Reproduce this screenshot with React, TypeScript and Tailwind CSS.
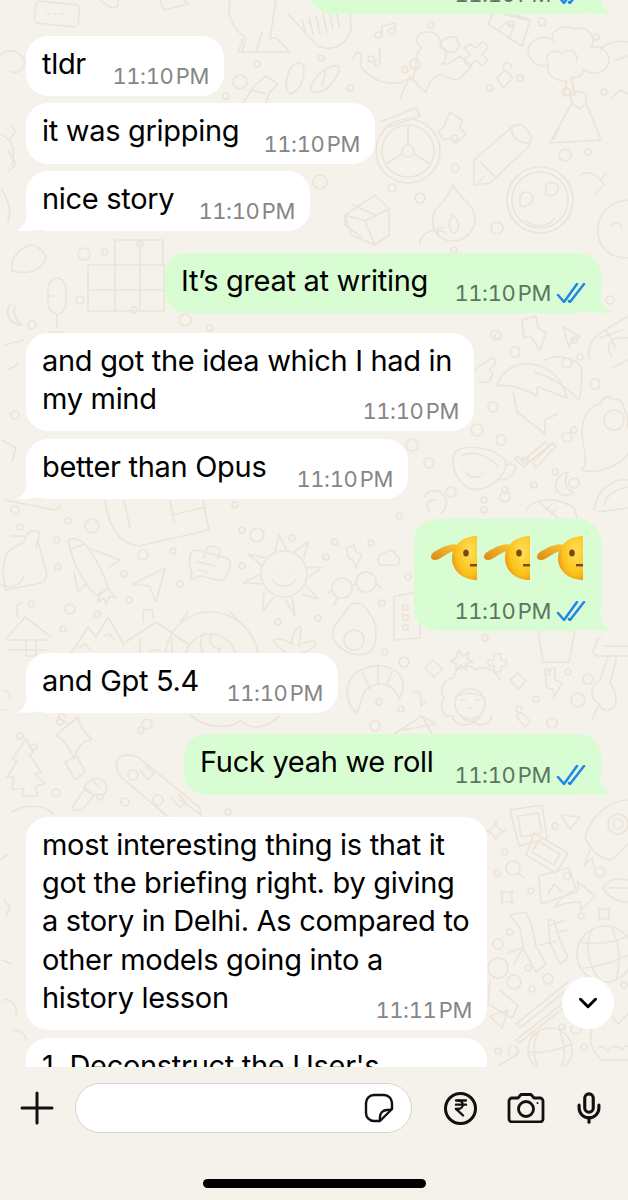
import React from 'react';
import { ChevronDown, IndianRupee, Mic } from 'lucide-react';

const dots: [number, number, number][] = [
  [92, 526, 7], [68, 521, 3], [57, 540, 3], [20, 527, 3], [58, 567, 3], [143, 555, 5], [173, 551, 3], [124, 574, 3], [180, 584, 3],
  [31, 604, 3], [70, 609, 5], [97, 614, 3], [129, 600, 3], [63, 629, 3], [242, 530, 3], [257, 535, 7], [235, 505, 3], [292, 538, 3],
  [242, 566, 3], [326, 557, 3], [335, 542, 3], [371, 543, 3], [399, 516, 3], [278, 622, 3], [318, 618, 3], [382, 603, 3], [408, 577, 3],
  [385, 652, 3], [404, 662, 5], [485, 638, 3], [379, 702, 3], [401, 709, 3], [547, 672, 3], [568, 672, 3], [588, 679, 5], [578, 700, 7],
  [536, 699, 3], [552, 723, 5], [375, 726, 5], [498, 336, 3], [496, 335, 5], [515, 352, 5], [493, 407, 5], [574, 340, 3], [567, 363, 5],
  [580, 357, 3], [595, 384, 5], [574, 430, 3], [477, 430, 6], [501, 440, 5], [567, 437, 5], [412, 445, 6], [429, 463, 5], [451, 492, 5],
  [534, 485, 3], [555, 472, 3], [574, 483, 5], [484, 500, 3], [505, 497, 5], [484, 510, 3], [525, 460, 3], [505, 490, 3],
  [405, 70, 3], [371, 59, 3], [431, 25, 3], [511, 24, 3], [542, 22, 4], [596, 37, 3], [520, 78, 3], [604, 92, 3], [240, 82, 7], [257, 64, 3],
  [321, 58, 3], [350, 88, 3], [226, 96, 3], [455, 138, 3], [490, 88, 3], [566, 92, 4], [455, 168, 4], [565, 155, 6], [588, 152, 3],
  [320, 182, 7], [392, 188, 4], [420, 198, 5], [497, 228, 6], [454, 250, 3], [84, 254, 6], [105, 252, 3], [140, 244, 3], [32, 325, 4],
  [80, 300, 4], [134, 310, 3], [185, 320, 6], [210, 328, 3], [610, 300, 4], [15, 415, 4], [15, 510, 4], [60, 722, 3], [20, 736, 3],
  [34, 747, 3], [133, 775, 5], [147, 724, 5], [141, 730, 3], [158, 800, 5], [56, 793, 4], [125, 802, 4], [100, 797, 3], [228, 812, 3],
  [505, 852, 3], [497, 873, 3], [531, 891, 3], [555, 826, 3], [600, 872, 5], [581, 916, 3], [510, 932, 3], [498, 944, 5], [528, 968, 3],
  [548, 979, 5], [532, 989, 3], [562, 1027, 3], [576, 1029, 5], [498, 1051, 3], [584, 1047, 3], [624, 985, 3],
];

function Doodles() {
  return (
    <svg className="absolute inset-0" width="628" height="1067" viewBox="0 0 628 1067" fill="none" stroke="#ece4d9" strokeWidth="1.700" strokeLinecap="round" strokeLinejoin="round">
      {dots.map(([x, y, r], i) => <circle key={i} cx={x} cy={y} r={r} />)}

      {/* top strip */}
      <rect x="35" y="3" width="44" height="22" rx="4" transform="rotate(6 57 14)" />
      <path d="M47 14h2m5 0h2m5 0h2M100 0c8 8 20 12 18 0M160 0l4 10 24-6-4-4" />
      <path d="M230 0c-4 16 4 30 14 36l-6 16h52l-14-14-6 0 6-38M246 38l-4 14M262 32l-6 20" />
      <path d="M288 14l30 32c14 6 30 0 33-18l-1-14M302 20l4 14M309 18l4 16M316 16l4 18M323 14l4 18M330 14l3 16M337 14l2 12" />
      <path d="M382 36v-10l13-3v9M382 36a3.500 3 0 1 1-1-3M395 32a3.500 3 0 1 1-1-3M380 48v14a3 3 0 1 1-3-2M380 48l-1 6" />
      <path d="M352 60l5-8c3 0 5 4 4 8l-1 6c10 12 24 20 42 16 6-4 10-2 10-2 6-10 2-30 10-32-10-6-4-18 6-16 10 0 14 8 12 14 8 4 8 14 2 18l6 0 12-8 12 10-14 14-10-2-6-4c-12 4-12 8-16 18-8-4-10-12-16-16l-10 22" />
      <circle cx="415" cy="64" r="5" />
      <path d="M441 42l7-5h7l5 8-5 7h-7l-7-5zM470 44l6 4 6-6c4 0 6 4 6 6l-6 6 6 6-6 6-6-6-6 6c-4 0-6-4-6-6l6-6-6-6z" />
      <path d="M488 24l8-16 34 12-8 26zM498 30l8-8 8 4-6 14M488 10l40 10" />
      <path d="M497 78l8-8 8 8-10 10zM505 70a4 4 0 1 1 6-2" />
      <path d="M564 95l3-14c-14 0-22-8-18-16-16 4-26-12-18-22 8-8 18-6 22-2-4-10 10-18 22-12 12-4 22 8 16 18 14-2 22 10 16 20-6 8-16 8-24 2 0 6-4 10-12 8l4 18zM548 62c-4-10 8-14 14-8 6-8 18-2 14 8" />
      <path d="M600 50c4-6 14-10 28-8M615 60l13-4M612 98l8-8 8 4" />
      <path d="M288 74c5-14 16-14 16-4 0 12-6 22-14 24-4-2-5-10-2-20zM311 86c6-14 20-22 28-20 2 6-6 18-14 24-8 4-16 2-14-4zM326 68l-4 18" />
      <path d="M266 76l12 8-8 8-6 16h-24l14-22zM252 90l14 4" />
      <path d="M0 55c6-6 18-6 24 4 2 10-6 16-14 12M2 135c10 4 14 16 10 30M10 125l6 6-6 8" />

      {/* wheel, pencil, volcano, faces */}
      <circle cx="408" cy="151" r="32" /><circle cx="408" cy="151" r="26" /><circle cx="408" cy="151" r="6" />
      <path d="M408 145v-20M402 154l-16 10M414 154l16 10M380 122l36-14 4 8-34 12" />
      <path d="M450 112l12 8-2 8 6 6-10 10-6-6-6 2-6-8 6-6z" />
      <path d="M474 160l38-33c6-4 12-2 16 4 4 6 4 10 0 16l-38 36-16 2zM512 127c-2 8 6 16 16 16M476 185l8-8M480 162l14 14" />
      <path d="M550 143l22-40 8 6 6-6 15 37zM560 125l-6 14M572 103l-2-10c4-2 10-2 16 0l0 10" />
      <circle cx="540" cy="200" r="33" /><circle cx="540" cy="200" r="28" />
      <path d="M520 198c0-8 12-8 13 0 0 6-8 10-13 8zM546 186c2-6 12-4 12 2 0 6-6 10-12 6zM525 220c8 8 22 8 30-2" />
      <path d="M632 200c-22 0-36 14-34 34 2 16 14 24 30 24M612 225c4-4 8-2 10 2" />
      <path d="M453 185c4 12 22 18 22 34 0 14-12 22-22 22-14 0-22-10-20-24 0-10 14-14 20-32zM453 215c-4 4-6 12 0 18 6 0 8-10 0-18" />
      <path d="M345 215l30-20 14 14v26l-14 10-24-10zM345 215l20 6 24-12M365 221l10 24M353 205l22 10M345 215v10l16 12" />
      <path d="M420 245c0-14 16-18 26-12M438 236v-8h6" />
      <path d="M580 175c8-6 18 0 24 10l-8 8M600 180l6-6" />
      <path d="M30 245c-12 4-20 14-18 26 16 4 30 0 34-14-2-6-10-12-16-12zM8 150l8 14-8 8M2 190c6 10 10 20 6 32" />

      {/* grid left */}
      <path d="M88 265h74M90 290h74M88 265v46h76v-46M115 240v70M140 240v70M115 240h48v25" />
      <path d="M48 290a9 12 0 0 1 18 0v12a9 12 0 0 1-18 0zM57 314v14M50 332h14M48 296h5" />
      <path d="M10 305c-6 8 0 20 12 20-8-6-10-14-6-20M5 345l18-5M8 370l10-6M2 440l14 8-4 14" />

      {/* right of the idea bubble */}
      <path d="M522 320l14-4 2 12 8 4-6 18-10-14-6 2zM563 327l17 10-7 2-4 8z" />
      <path d="M590 360c-4-12 2-22 12-28l26-16M606 330l10 18M600 338l22-8M612 356c-6-6-4-16 6-18l10 0M612 368l16-8" />
      <path d="M497 386c4-16 20-24 34-22 14 2 30 10 36 34l-26-10c-4-2-4-2-4 4l0 4c-14-8-28-12-40-10z" />
      <path d="M545 360c10-6 26-4 36 6 2 12 0 24-2 34-10-10-24-22-44-28M513 392l4 20 28 22 0-14 12-6" />
      <path d="M475 370c2-4 12-8 14-10 4-4 8 0 6 4l-6 6 4 4-4 8-10 0" />
      <path d="M582 470c8-10 0-22 0-38 0-16 8-26 18-28l2-4c4-4 8-4 12 0 6-2 10 4 10 8 4 8 4 18 4 20" />
      <circle cx="614" cy="420" r="10" />
      <path d="M582 470c16 4 34-2 46-16" />
      <path d="M455 452c10-8 36-6 50 8 2 8 0 12-6 18-6 8-20 14-30 10-12-6-20-22-14-36zM462 456c8-6 24-2 36 10M505 466c6-4 12-2 10 4s-8 10-16 10M463 470h1M482 474h1M466 472c4 6 10 6 14 4" />
      <path d="M517 456l6 5 22-19 4 4-26 21-8-8zM533 463l19-20 4 3-20 22z" />
      <path d="M568 472c-12 2-16 16-8 22 4 2 10 2 14-2-6 0-12-8-6-20z" />
      <path d="M526 510c8-12 30-14 48-2l4 12M540 503l18 15M546 510l5-5M551 514l5-5" />
      <path d="M594 510c2-20 20-32 34-30M604 505c2-10 12-16 24-18M598 512l30-4" />
      <path d="M425 497c2-8 14-8 18-2 6 4 4 14-2 18M430 512c-6-6-2-14 6-12" />

      {/* backpack, rocket, plane row */}
      <path d="M5 500l50 10c4 0 5-4 5-6M105 500c4 28 14 44 34 46l70-16-6-30M124 500l6 28M170 500l4 22M172 515l34-8" />
      <path d="M8 552c-6 10-6 24-2 38l30-6c10-2 12-6 10-14l-8-28M8 552c8-8 20-8 16-16l-12 0M26 537c2-6 10-8 14-4l-4 14M0 584c10 6 20 2 24-8" />
      <path d="M68 540c8-4 14 0 20 8 8 12 16 24 20 40l-10 8c-12-8-24-28-30-56zM70 550l14-6M88 548l32 12-12 8M74 572l4 20 10-10M100 592l-2 10 6-4 2 6 4-8 6 2-8-10" />
      <path d="M133 584l32-16-9 34-7-16zM149 586l-16-2" />
      <path d="M190 558c0-4 2-8 6-8l30 8c4 1 5 4 4 8l-4 10c-1 4-4 4-8 4l-18-4-10 4 2-8c-2-4-3-10-2-14zM204 558l2-8c2-6 14-4 14 2l-2 6M198 562l18 4M198 570l10 2" />
      <circle cx="284" cy="574" r="23" />
      <path d="M277 573h1M290 573h1M272 580c6 8 18 8 24 0M275 551l4-16 8 16M294 552l14-10-4 16M307 568l15-1-13 10M305 584l13 15-16-5M292 596l3 20-10-17M274 597l-11 14 1-18M263 584l-20 -1 17-9M262 566l-14-12 18 4" />
      <circle cx="342" cy="588" r="10" /><circle cx="366" cy="582" r="10" />
      <path d="M352 585l4-1M376 584l6 4M332 590l-4 3M338 597l-4 8M346 548l8-3 3 8 5 1-6 14-3-8-4-1zM378 558c0-4 6-4 8-6 4-4 10 0 10 4 4 0 6 8 0 9h-14c-3 0-5-4-4-7z" />
      <path d="M334 640c-6-12 8-22 14-32 6-8 16-6 22 6 8 10 8 30 0 38-14 8-30-2-36-12z" /><circle cx="354" cy="640" r="10" />
      <path d="M394 596l26-4v46l-26 2zM403 605h5v5h-5zM403 615h5v5h-5zM403 625h5v5h-5z" />
      <path d="M5 640l20-23 26 20M8 640h40M8 650h40M26 640v16h10v-16M18 618l-2-12 6-4" />
      <path d="M70 655l18-28 8 10 12-20 16 28M78 648l8-4 4 6M104 636l6-2 4 6" />
      <path d="M126 642l30-20 32 22M140 638v18M172 638v18M150 658v-8h10v8M143 622v-12h10v8" />
      <path d="M165 660c0-28 20-48 45-48s48 20 48 48M185 660c0-14 10-26 25-26s26 12 26 26M204 632c-6 10-4 24 6 26 6 0 10-4 10-10-6 2-14-6-8-14M188 612l-8 10M230 612l8 8" />
      <path d="M286 652c-8-4-12-8-12-12 6-2 12 0 18 4 0-8 2-14 8-18 2 6 0 14-2 20 6-4 12-6 18-4 0 6-10 10-20 12" />

      {/* croissant, woman, key */}
      <path d="M357 713c-14-12-14-36 6-44 14-6 30-4 38 8 4 8 2 16-2 22-2-6-6-12-12-14-8-2-18 0-22 6-4 6-4 14-8 22zM362 670l8 20M378 665l0 18M392 672l-6 14" />
      <path d="M425 668l8-8 9 9-8 8zM432 668h1M459 650l4 6 6-4-2 7 6 3-7 2 0 6-5-5-5 5 0-7-6-1 6-4zM488 660h6v-6h7v6h5v6h-5v6h-7v-6h-6z" />
      <path d="M538 630l5 32h26l6-32" />
      <path d="M601 638c-4 0-6 4-4 8-4 0-6 8 0 10h31M603 646h25" />
      <path d="M500 680c-4-10-16-16-24-10-8-8-22-2-22 8-10 0-16 12-10 20-6 10 0 20 8 18 2 8 14 12 22 6 6 6 16 2 18-6" />
      <circle cx="470" cy="704" r="15" />
      <path d="M461 700h4M475 700h4M468 708h4M462 717c4 6 14 6 18 0M455 698c6-6 24-6 30 0" />
      <path d="M413 692c4-2 8 0 8 6v8l4-4" />
      <path d="M510 680l8-7 8 8-8 8zM545 670l10-2 0 12 7 3-8 14-1-8-6-1zM516 716l5-4 9 9-5 6zM518 712a3 3 0 1 1 4-2" />
      <path d="M598 703c-10-6-6-20 2-22l8-24c4-2 10-2 8 4l-6 22c6 8 8 18 4 24-6 6-12 4-16-4zM592 720l6-14" />
      <path d="M394 734l28-18M432 734l-10-18 14 8M402 730l34-6" />
      <path d="M62 692c-4 10-4 18 4 26M2 690c6 0 8 4 8 8M2 710h6" />

      {/* lower left */}
      <path d="M12 790l12-2-2 8h16l-3-10 10-2-10-10 6-2-12-18 4-1-7-14-14 20 5 2-10 16 7 0z" />
      <path d="M56 735l22-18c2 12 8 16 14 22-10 2-16 10-18 20-4-10-10-20-18-24zM65 762l12-6 8 16-10 8zM70 725l-12-8 2-4" />
      <path d="M74 804l12-16 8 8-12 14-10 0zM84 788c4-8 12-12 18-8 6 4 6 10 2 14-8 2-16 0-20-6zM92 780l8 8" />
      <path d="M119 757c8-4 18-2 24 4l56 46c4 8 2 14-6 14h-20l-52-44c-6-8-6-14-2-20zM140 770l8 10 6-6-8-8M172 798l8 10 6-6-8-8" />
      <path d="M190 715c16 14 40 14 50 6M240 720c10 10 24 10 40-4M180 800l20 14M12 812c14-8 30-8 42 2" />
      <path d="M0 860l8-6M4 900l6 8-4 8M2 960l10 4M4 1000c8-2 14 8 12 16M14 1030c6 0 12 4 12 10" />

      {/* photos, bamboo, globe */}
      <path d="M510 810l32-5 5 33-28 8zM518 816l20-3 4 20-21 4z" />
      <path d="M534 833l34 20-12 20-30-18zM538 841l22 13-6 11-22-13z" />
      <path d="M539 876l30-8 8 24-36 12zM548 894l6-10 8 8M567 873a3.500 3.500 0 1 0 .1 0" />
      <path d="M555 907c6-12 16-16 24-18l-2-8 18 15-14 14-1-8c-10 0-18 2-25 5z" />
      <path d="M496 822c1 6 3 8 9 9-6 2-8 4-9 10-2-6-4-8-9-10 5-1 8-3 9-9zM501 891c4 2 8 2 12 0-2 4-2 8 0 12-4-2-8-2-12 0 2-4 2-8 0-12zM598 908c4 2 8 2 12 0-2 4-2 8 0 12-4-2-8-2-12 0 2-4 2-8 0-12z" />
      <path d="M561 815l19 2-10 12z" />
      <path d="M585 838c4-20 24-38 43-38M585 838c4 8 12 20 26 22l17-16M590 850l-6 16 8-8 2 10" />
      <circle cx="618" cy="824" r="10" /><circle cx="618" cy="824" r="5" />
      <circle cx="513" cy="868" r="7" /><path d="M518 873l6 5" />
      <path d="M603 888c6-10 16-10 25-8M603 888c6 10 16 14 25 14M608 888h20" />
      <path d="M510 915l16-3 6 14 4 20 10 18-10 8-12-22-4-22zM548 920l6 0 6 20 8 18-8 6-10-22zM508 953l16-6M524 946l-10 18M550 925l16-5M556 932l12-2M540 945l16-4" />
      <circle cx="605" cy="954" r="28" />
      <path d="M580 942c14 4 40 0 50-8M580 968c14 0 36-6 50-14M592 930c-8 14-4 36 8 50M612 928c6 14 10 30 4 52" />
      <circle cx="498" cy="968" r="10" /><circle cx="514" cy="982" r="7" />
      <path d="M490 980l-2 24 24 14 6-12-18-16" />
      <path d="M568 982l-52 42 4 4 54-44M572 996l-56 44 3 3 56-44" />
      <path d="M490 1016l18-6-6 18z" />
      <circle cx="550" cy="1050" r="22" />
      <path d="M528 1052c14 2 30-2 44-8M540 1030c-8 10-8 28 0 40M560 1032c6 14 6 26 0 38" />
      <path d="M498 1066l20-12 -2-8M510 1046l-2 10M520 1050l-8 8" />
      <path d="M592 1030c-4 10 0 22 10 30h26M598 1048c6-4 8 2 10 4 2-6 8-8 14-2 2-4 4-4 6-4M612 1016l6 8 10-10" />
    </svg>
  );
}

function Ticks() {
  return (
    <svg width="30" height="20" viewBox="0 0 30 20" fill="none" stroke="#2385ea" strokeWidth="2.500" strokeLinecap="round" strokeLinejoin="round">
      <path d="M2 12l6 7L21 1" />
      <path d="M13 18l1 1L28 1" />
    </svg>
  );
}

function Salute() {
  return (
    <svg width="46" height="44" viewBox="0 0 46 44">
      <defs>
        <radialGradient id="face" cx="0.7" cy="0.35" r="0.8">
          <stop offset="0" stopColor="#ffdf5a" />
          <stop offset="0.65" stopColor="#fcc21b" />
          <stop offset="1" stopColor="#e88a10" />
        </radialGradient>
        <linearGradient id="arm" x1="0" y1="1" x2="1" y2="0">
          <stop offset="0" stopColor="#d98a12" />
          <stop offset="1" stopColor="#fbc437" />
        </linearGradient>
      </defs>
      <path d="M46 0C32 0 21 9 21 22s11 22 25 22z" fill="url(#face)" />
      <path d="M0 21c0-5 7-7 12-10 5-2 11-4 14-2 2 3-2 6-6 7-5 2-8 5-12 7-4 2-8 1-8-2z" fill="url(#arm)" />
      <ellipse cx="35" cy="17" rx="2.800" ry="3.600" fill="#7a4a12" />
      <rect x="39" y="28" width="7" height="2.400" fill="#7a4a12" />
    </svg>
  );
}

function Bubble({ sent, tail, width, className, children }: { sent?: boolean; tail?: boolean; width: string; className?: string; children: React.ReactNode }) {
  return (
    <div className={`relative rounded-[22px] shrink-0 ${width} ${sent ? 'self-end bg-[#d9fdd3] mr-[27px]' : 'self-start bg-white ml-[26px]'} ${className ?? ''}`}>
      {children}
      {tail && !sent && (
        <svg className="absolute left-[-9px] bottom-0" width="24" height="18" viewBox="0 0 24 18">
          <path d="M10 0c0 8-3 14-10 17.500 6 .8 14 .5 24-1.500z" fill="#ffffff" />
        </svg>
      )}
      {tail && sent && (
        <svg className="absolute right-[-11px] bottom-0" width="26" height="18" viewBox="0 0 26 18">
          <path d="M14 0c1 8 4 14 12 17.500-8 .8-16 .5-26-1.500z" fill="#d9fdd3" />
        </svg>
      )}
    </div>
  );
}

function Row({ text, time, sent }: { text?: React.ReactNode; time?: string; sent?: boolean }) {
  return (
    <div className="flex items-end justify-between min-h-[60px] pl-4 pr-[15px]">
      <div className="pt-[9px] pb-[13px] text-[29px] leading-[38.300px] tracking-[-0.3px] whitespace-nowrap text-black">{text}</div>
      {time && <Time time={time} sent={sent} />}
    </div>
  );
}

function Time({ time, sent }: { time: string; sent?: boolean }) {
  return (
    <div className={`flex items-center pb-2 gap-[5px] text-[22px] leading-[24px] tabular-nums tracking-[-0.4px] [word-spacing:-3px] whitespace-nowrap ${sent ? 'text-[#5d7560]' : 'text-[#868686]'}`}>
      <span>{time}</span>
      {sent && <Ticks />}
    </div>
  );
}

export default function App() {
  return (
    <div className="flex flex-col w-[628px] h-[1200px] overflow-hidden bg-[#f5f2eb] font-['Inter',sans-serif]">
      <div className="relative h-[1067px] shrink-0 overflow-hidden">
        <Doodles />
        <div className="relative flex flex-col mt-[-46px]">
          <Bubble sent tail width="w-[291px]"><div className="flex justify-end h-[60px] pt-[28px] pr-[15px]"><Time time="11:10 PM" sent /></div></Bubble>
          <Bubble width="w-[198px]" className="mt-[22px]"><Row text="tldr" time="11:10 PM" /></Bubble>
          <Bubble width="w-[349px]" className="mt-[7px]"><Row text="it was gripping" time="11:10 PM" /></Bubble>
          <Bubble tail width="w-[284px]" className="mt-[7px]"><Row text="nice story" time="11:10 PM" /></Bubble>
          <Bubble sent tail width="w-[436px]" className="mt-[22px]"><Row text="It’s great at writing" time="11:10 PM" sent /></Bubble>
          <Bubble width="w-[448px]" className="mt-[20px]">
            <div className="px-4 pt-[9px] text-[29px] leading-[38.300px] tracking-[-0.3px] whitespace-nowrap text-black">and got the idea which I had in<br />my mind</div>
            <div className="flex justify-end pr-[15px] mt-[-20px]"><Time time="11:10 PM" /></div>
          </Bubble>
          <Bubble tail width="w-[382px]" className="mt-[8px]"><Row text="better than Opus" time="11:10 PM" /></Bubble>
          <Bubble sent tail width="w-[187px]" className="mt-[20px]">
            <div className="flex flex-col items-end pr-[15px] h-[112px] justify-between">
              <div className="flex gap-[7px] pt-[17px] pr-[3px]"><Salute /><Salute /><Salute /></div>
              <Time time="11:10 PM" sent />
            </div>
          </Bubble>
          <Bubble tail width="w-[312px]" className="mt-[22px]"><Row text="and Gpt 5.4" time="11:10 PM" /></Bubble>
          <Bubble sent tail width="w-[417px]" className="mt-[21px]"><Row text="Fuck yeah we roll" time="11:10 PM" sent /></Bubble>
          <Bubble width="w-[461px]" className="mt-[22px]">
            <div className="px-4 pt-[9px] text-[29px] leading-[38.300px] tracking-[-0.3px] whitespace-nowrap text-black">
              most interesting thing is that it<br />got the briefing right. by giving<br />a story in Delhi. As compared to<br />other models going into a<br />history lesson
            </div>
            <div className="flex justify-end pr-[15px] mt-[-19px]"><Time time="11:11 PM" /></div>
          </Bubble>
          <Bubble width="w-[461px]" className="mt-[8px]"><Row text="1. Deconstruct the User's" /></Bubble>
        </div>
        <button className="absolute left-[562px] top-[977px] flex items-center justify-center w-[52px] h-[52px] rounded-full bg-white">
          <ChevronDown className="w-[30px] h-[30px] text-black" strokeWidth={2.400} />
        </button>
      </div>
      <div className="flex items-center h-[50px] mt-[16px]">
        <svg className="ml-[20px]" width="34" height="34" viewBox="0 0 34 34" stroke="#111" strokeWidth="3" strokeLinecap="round">
          <path d="M17 2v30M2 17h30" />
        </svg>
        <div className="flex items-center justify-end ml-[21px] w-[337px] h-[50px] rounded-full bg-white border border-[#d6d3ce] pr-[17px]">
          <svg width="30" height="30" viewBox="0 0 30 30" fill="none" stroke="#111" strokeWidth="2.400" strokeLinejoin="round">
            <path d="M10 2h10a8 8 0 0 1 8 8v6L16 28h-6a8 8 0 0 1-8-8V10a8 8 0 0 1 8-8z" />
            <path d="M28 16c-2 1-3 1-5 1-4 0-7 3-7 7 0 1 0 3-.5 4" />
          </svg>
        </div>
        <div className="flex items-center justify-center ml-[32px] w-[33px] h-[33px] rounded-full border-[3px] border-[#111]">
          <IndianRupee className="w-[20px] h-[20px] text-[#111]" strokeWidth={2.800} />
        </div>
        <svg className="ml-[30px]" width="38" height="30" viewBox="0 0 38 30" fill="none" stroke="#111" strokeWidth="2.800" strokeLinejoin="round">
          <path d="M5 5h6l3-3.500h10L27 5h6a3 3 0 0 1 3 3v18a3 3 0 0 1-3 3H5a3 3 0 0 1-3-3V8a3 3 0 0 1 3-3z" />
          <circle cx="19" cy="16" r="7.500" />
          <circle cx="30.500" cy="10" r="1" fill="#111" stroke="none" />
        </svg>
        <Mic className="ml-[27px] w-[34px] h-[38px] text-[#111]" strokeWidth={2.200} />
      </div>
      <div className="mx-auto mt-[46px] w-[223px] h-[9px] rounded-full bg-black" />
    </div>
  );
}
